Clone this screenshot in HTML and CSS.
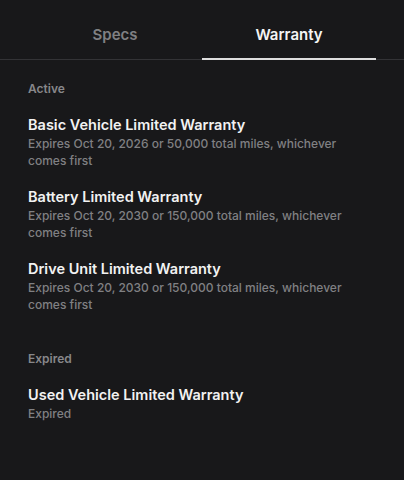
FILE: index.html
```html
<!DOCTYPE html>
<html lang="en">
<head>
    <meta charset="UTF-8">
    <meta name="viewport" content="width=device-width, initial-scale=1.0">
    <title>Warranty</title>
    <link rel="stylesheet" href="styles.css">
</head>
<body>
    <div class="tabs">
        <div class="tab">Specs</div>
        <div class="tab active">Warranty</div>
    </div>
    <div class="content">
        <div class="section">
            <div class="section-title">Active</div>
            <div class="item">
                <div class="item-title">Basic Vehicle Limited Warranty</div>
                <div class="item-sub">Expires Oct 20, 2026 or 50,000 total miles, whichever comes first</div>
            </div>
            <div class="item">
                <div class="item-title">Battery Limited Warranty</div>
                <div class="item-sub">Expires Oct 20, 2030 or 150,000 total miles, whichever comes first</div>
            </div>
            <div class="item">
                <div class="item-title">Drive Unit Limited Warranty</div>
                <div class="item-sub">Expires Oct 20, 2030 or 150,000 total miles, whichever comes first</div>
            </div>
        </div>
        <div class="section">
            <div class="section-title">Expired</div>
            <div class="item">
                <div class="item-title">Used Vehicle Limited Warranty</div>
                <div class="item-sub">Expired</div>
            </div>
        </div>
    </div>
</body>
</html>
```

FILE: styles.css
```css
* {
    box-sizing: border-box;
    margin: 0;
    padding: 0;
    font-family: Inter, 'Noto Sans', sans-serif;
}

body {
    background-color: #18181a;
    color: #f2f2f2;
    width: 404px;
    height: 480px;
    overflow: hidden;
}

.tabs {
    display: flex;
    padding: 0 28px;
    border-bottom: 1px solid #333336;
}

.tab {
    flex: 1;
    height: 60px;
    padding-top: 25px;
    text-align: center;
    font-size: 15px;
    font-weight: 600;
    color: #808083;
    border-bottom: 2px solid transparent;
    margin-bottom: -1px;
}

.tab.active {
    color: #f4f4f4;
    border-bottom-color: #dedede;
}

.content {
    padding: 21px 28px 0;
}

.section {
    margin-bottom: 38px;
}

.section-title {
    font-size: 12px;
    font-weight: 600;
    color: #87878a;
    margin-bottom: 20px;
}

.item {
    margin-bottom: 19px;
}

.item-title {
    font-size: 14.5px;
    font-weight: 600;
    color: #f2f2f2;
    line-height: 18px;
    margin-bottom: 1px;
}

.item-sub {
    font-size: 12px;
    font-weight: 500;
    color: #808083;
    line-height: 17px;
}
```
